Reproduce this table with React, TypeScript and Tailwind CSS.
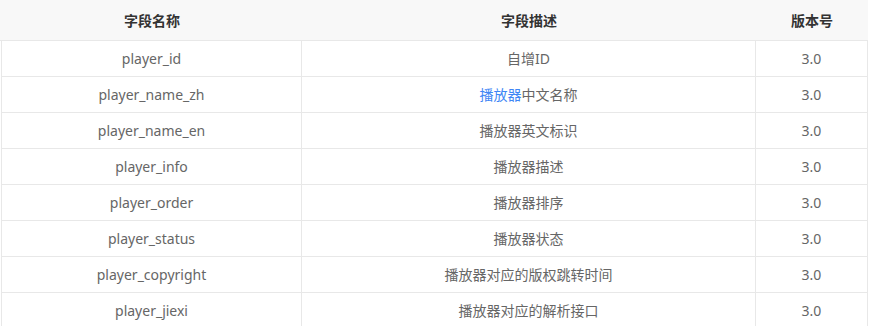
import React from "react";

const rows: { name: string; desc: React.ReactNode; ver: string }[] = [
  { name: "player_id", desc: "自增ID", ver: "3.0" },
  {
    name: "player_name_zh",
    desc: (
      <>
        <a className="text-[#3e86f5]">播放器</a>中文名称
      </>
    ),
    ver: "3.0",
  },
  { name: "player_name_en", desc: "播放器英文标识", ver: "3.0" },
  { name: "player_info", desc: "播放器描述", ver: "3.0" },
  { name: "player_order", desc: "播放器排序", ver: "3.0" },
  { name: "player_status", desc: "播放器状态", ver: "3.0" },
  { name: "player_copyright", desc: "播放器对应的版权跳转时间", ver: "3.0" },
  { name: "player_jiexi", desc: "播放器对应的解析接口", ver: "3.0" },
];

export default function App() {
  return (
    <div
      className="w-[873px] h-[326px] overflow-hidden bg-white text-[14px]"
      style={{ fontFamily: '"Noto Sans", "Noto Sans CJK SC", sans-serif' }}
    >
      <div className="w-[868px] h-[41px] bg-[#f8f8f8] border-b border-[#e8e8e8] flex font-bold text-[#333]">
        <div className="w-[302px] flex items-center justify-center pl-[2px]">字段名称</div>
        <div className="w-[454px] flex items-center justify-center">字段描述</div>
        <div className="w-[112px] flex items-center justify-center">版本号</div>
      </div>
      <div className="ml-[1px] w-[867px] border-l border-[#e8e8e8] text-[#666]">
        {rows.map((r) => (
          <div key={r.name} className="flex h-[36px] border-b border-[#e8e8e8]">
            <div className="w-[300px] border-r border-[#e8e8e8] flex items-center justify-center">{r.name}</div>
            <div className="w-[454px] border-r border-[#e8e8e8] flex items-center justify-center">{r.desc}</div>
            <div className="w-[112px] border-r border-[#e8e8e8] flex items-center justify-center">{r.ver}</div>
          </div>
        ))}
      </div>
    </div>
  );
}
